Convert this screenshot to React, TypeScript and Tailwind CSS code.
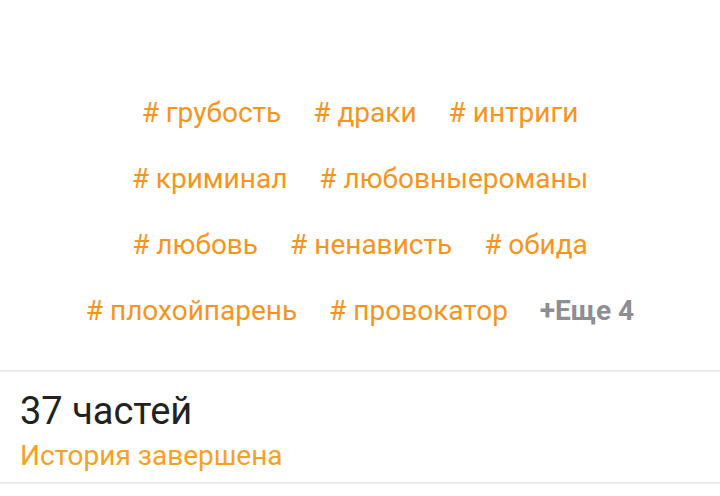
const rows = [
  ["грубость", "драки", "интриги"],
  ["криминал", "любовныероманы"],
  ["любовь", "ненависть", "обида"],
  ["плохойпарень", "провокатор"],
];

export default function App() {
  return (
    <div
      className="w-[720px] h-[496px] bg-white overflow-hidden"
      style={{ fontFamily: "Roboto, 'Noto Sans', sans-serif" }}
    >
      {/* tag cloud */}
      <div className="pt-[80px] pb-[26px] flex flex-col items-center">
        {rows.map((row, i) => (
          <div key={i} className="flex justify-center">
            {row.map((tag) => (
              <span
                key={tag}
                className="h-[66px] px-4 flex items-center text-[28px] text-[#f7941d]"
              >
                # {tag}
              </span>
            ))}
            {i === rows.length - 1 && (
              <span className="h-[66px] px-4 flex items-center text-[28px] font-bold text-[#8e8e93]">
                +Еще 4
              </span>
            )}
          </div>
        ))}
      </div>

      {/* parts info */}
      <div className="border-t-2 border-b-2 border-[#ebebed] px-5 pt-[17px] pb-[9px]">
        <div className="text-[38px] leading-[44px] text-[#222222]">37 частей</div>
        <div className="mt-[6px] text-[28px] leading-[34px] text-[#f7a022]">
          История завершена
        </div>
      </div>
    </div>
  );
}
